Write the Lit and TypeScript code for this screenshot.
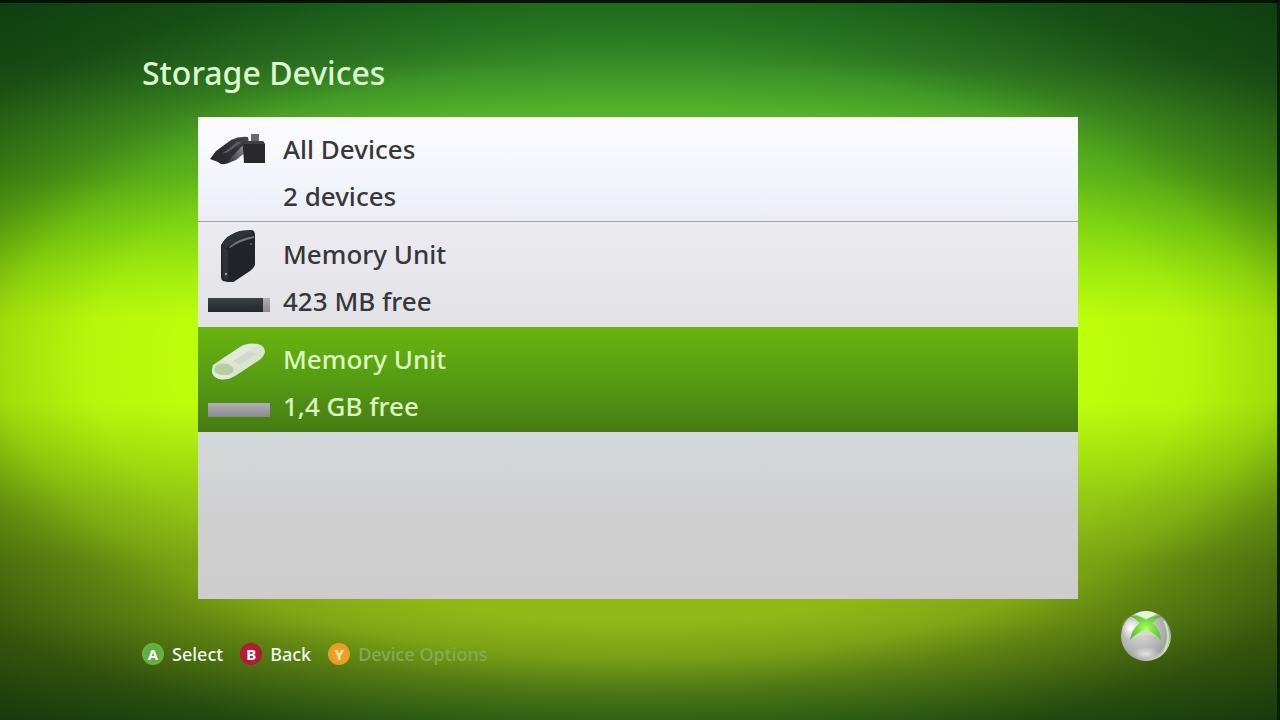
import { LitElement, html, css, svg, nothing } from "lit";
import { customElement, property, state } from "lit/decorators.js";
import { classMap } from "lit/directives/class-map.js";

type Kind = "all" | "unit" | "usb";

interface Device {
  kind: Kind;
  name: string;
  detail: string;
  used?: number;
}

const allIcon = svg`
  <svg viewBox="0 -5 62 54" aria-hidden="true">
    <defs>
      <linearGradient id="arm" x1="0" y1="1" x2="1" y2="0">
        <stop offset="0" stop-color="#26262b" />
        <stop offset=".6" stop-color="#303036" />
        <stop offset="1" stop-color="#4b4b50" />
      </linearGradient>
      <linearGradient id="side" x1="0" y1="1" x2="1" y2="0">
        <stop offset="0" stop-color="#2c2c31" />
        <stop offset="1" stop-color="#a5a5aa" />
      </linearGradient>
    </defs>
    <path d="M18 36 L22 26 L33 16 L40 13 L38 24 L28 32 Z" fill="url(#side)" />
    <path d="M2 31 L8 23 L23 12 Q31 8 40 9 L41 15 L33 19 L24 29 L19 35 Q14 38 10 34 Z" fill="url(#arm)" />
    <path d="M14 26 L29 14 L34 14 L20 24 Z" fill="#5c5c62" />
    <path d="M43 6 H51 V13 H43 Z" fill="#68686e" />
    <path d="M36 13 H55 L57 16 V35 H36 L35 20 Z" fill="#28282d" />
    <path d="M37 13 H55 L56 16 H36 Z" fill="#3f3f45" />
  </svg>`;

const unitIcon = svg`
  <svg viewBox="0 -2 62 54" aria-hidden="true">
    <path d="M13 15 Q18 5 32 1 L44 0 Q47 1 47 5 L47 35 Q46 38 42 41 L24 53 L15 51 Q13 50 13 46 Z" fill="#222429" />
    <path d="M13 16 Q18 5 32 1 L43 0 L44 5 Q31 7 19 18 Z" fill="#303239" />
    <path d="M21 17 Q31 8 46 6 L46 8 Q32 11 22 18 Z" fill="#73747a" />
    <path d="M14 17 L20 20 V50 L15 49 Z" fill="#303238" />
    <circle cx="18" cy="44" r="1.2" fill="#9a9aa0" />
    <circle cx="43" cy="14" r="1" fill="#65666c" />
  </svg>`;

const usbIcon = svg`
  <svg viewBox="0 -3 62 54" aria-hidden="true">
    <path d="M5 29 L32 11 Q39 6 50 8 Q57 10 57 16 Q56 21 50 25 L27 40 Q19 45 11 43 Q3 40 4 33 Z" fill="#d9e6cd" />
    <path d="M14 23 L34 10 Q40 7 50 9 L22 27 Z" fill="#e2e8db" />
    <path d="M25 25 L41 15 L48 18 L32 29 Z" fill="#d2d8cb" />
    <path d="M7 31 Q12 26 20 28 Q27 31 25 36 Q19 41 12 39 Q5 37 7 31 Z" fill="#b3cda5" />
    <path d="M4 34 Q8 40 20 39 L24 41 Q13 45 9 42 Q4 40 4 34 Z" fill="#e2efd8" />
  </svg>`;

const icons = { all: allIcon, unit: unitIcon, usb: usbIcon };

@customElement("device-row")
export class DeviceRow extends LitElement {
  static styles = css`
    :host {
      display: block;
    }
    .row {
      box-sizing: border-box;
      display: grid;
      grid-template-columns: 62px 1fr;
      grid-template-rows: 47px 47px;
      column-gap: 13px;
      align-items: center;
      width: 100%;
      height: 105px;
      padding: 9px 10px 0;
      border: 0;
      border-bottom: 1px solid transparent;
      background: none;
      color: #37373b;
      font: 500 26px/47px "Noto Sans", "Open Sans", sans-serif;
      text-align: left;
      cursor: pointer;
    }
    .row:focus {
      outline: none;
    }
    .divided {
      border-bottom-color: #a3a4a7;
    }
    .selected {
      background: linear-gradient(#6ab40f, #579f12 45%, #467b14) border-box;
      color: #dcf7c0;
    }
    .picture svg {
      display: block;
      width: 62px;
      height: 54px;
    }
    .meter {
      height: 14px;
      margin-top: 6px;
      background: linear-gradient(#b0b0b3, #8a8a8e);
    }
    .used {
      display: block;
      height: 100%;
      background: linear-gradient(#3c4145, #22272c);
    }
  `;

  @property({ attribute: false }) device!: Device;
  @property({ type: Boolean }) selected = false;
  @property({ type: Boolean }) divided = false;

  render() {
    const { kind, name, detail, used } = this.device;
    return html`
      <button
        class=${classMap({ row: true, selected: this.selected, divided: this.divided })}
        aria-pressed=${this.selected}
      >
        <span class="picture">${icons[kind]}</span>
        <span>${name}</span>
        ${used === undefined
          ? html`<span></span>`
          : html`<span class="meter">
              ${used ? html`<span class="used" style="width:${used}%"></span>` : nothing}
            </span>`}
        <span>${detail}</span>
      </button>
    `;
  }
}

@customElement("app-root")
export class AppRoot extends LitElement {
  static styles = css`
    :host {
      display: block;
      font-family: "Noto Sans", "Open Sans", sans-serif;
    }
    .screen {
      box-sizing: border-box;
      display: flex;
      flex-direction: column;
      min-height: 100vh;
      padding: 49px 104px 0 142px;
      border-top: 3px solid #041204;
      border-right: 3px solid #06200a;
      background:
        radial-gradient(
          60% 50% at 50% 50%,
          rgba(0, 28, 5, 0) 56%,
          rgba(0, 28, 5, 0.04) 72%,
          rgba(0, 28, 5, 0.15) 83%,
          rgba(0, 28, 5, 0.34) 92%,
          rgba(0, 28, 5, 0.64) 112%,
          rgba(0, 28, 5, 0.76) 130%
        ),
        linear-gradient(
          #38ac30 0%,
          #42a030 8%,
          #58ba2a 16%,
          #66c41c 24%,
          #84dc12 31%,
          #a6f20e 38%,
          #beff0c 44%,
          #beff0c 56%,
          #a8e80e 63%,
          #96cc14 70%,
          #8cb816 78%,
          #98c018 86%,
          #8cb41a 92%,
          #5c9c22 100%
        );
    }
    .title {
      margin: 0;
      color: #dcfcd0;
      font-size: 32px;
      font-weight: 500;
      line-height: 42px;
    }
    .panel {
      flex: 1;
      margin: 23px 95px 0 56px;
      padding: 0;
      list-style: none;
      background: linear-gradient(
        #fdfdff 0,
        #f0f2fb 80px,
        #ececf0 105px,
        #e2e2e6 210px,
        #d5d8da 320px,
        #cfcfd0 400px,
        #cdcdce 100%
      );
    }
    .bar {
      display: flex;
      justify-content: space-between;
      align-items: flex-start;
      padding-bottom: 52px;
    }
    .actions {
      display: flex;
      gap: 17px;
      padding-top: 41px;
    }
    .action {
      display: flex;
      align-items: center;
      gap: 8px;
      padding: 0;
      border: 0;
      background: none;
      color: #eff8e8;
      font: 500 18px/28px "Noto Sans", "Open Sans", sans-serif;
      cursor: pointer;
    }
    .action:disabled {
      color: #83ab58;
      cursor: default;
    }
    .key {
      width: 22px;
      border-radius: 50%;
      color: #fff;
      font-size: 15px;
      font-weight: 700;
      line-height: 22px;
      text-align: center;
    }
    .a {
      background: radial-gradient(#58a63a, #6cba45);
    }
    .b {
      background: radial-gradient(#bd2440, #a8142c);
    }
    .y {
      background: radial-gradient(#eda52c, #e59a20);
      color: #fbeab8;
    }
    .guide {
      padding: 0;
      margin-top: 10px;
      border: 0;
      background: none;
      cursor: pointer;
    }
    .guide svg {
      display: block;
      width: 54px;
      height: 54px;
    }
  `;

  @state() private selected = 2;

  private devices: Device[] = [
    { kind: "all", name: "All Devices", detail: "2 devices" },
    { kind: "unit", name: "Memory Unit", detail: "423 MB free", used: 89 },
    { kind: "usb", name: "Memory Unit", detail: "1,4 GB free", used: 0 },
  ];

  render() {
    return html`
      <main class="screen">
        <h1 class="title">Storage Devices</h1>
        <ul class="panel">
          ${this.devices.map(
            (device, i) => html`<li>
              <device-row
                .device=${device}
                ?selected=${i === this.selected}
                ?divided=${i + 1 < this.selected}
                @click=${() => (this.selected = i)}
              ></device-row>
            </li>`
          )}
        </ul>
        <footer class="bar">
          <div class="actions">
            <button class="action"><span class="key a">A</span>Select</button>
            <button class="action"><span class="key b">B</span>Back</button>
            <button class="action" disabled><span class="key y">Y</span>Device Options</button>
          </div>
          <button class="guide" aria-label="Guide">
            <svg viewBox="0 0 54 54" aria-hidden="true">
              <defs>
                <radialGradient id="ball" cx=".4" cy=".4" r=".65">
                  <stop offset="0" stop-color="#dcdcdc" />
                  <stop offset=".55" stop-color="#b9b9bb" />
                  <stop offset=".85" stop-color="#a0a4a0" />
                  <stop offset="1" stop-color="#d3dfce" />
                </radialGradient>
                <radialGradient id="shine">
                  <stop offset="0" stop-color="#fff" />
                  <stop offset="1" stop-color="#fff" stop-opacity="0" />
                </radialGradient>
                <radialGradient id="glow" gradientUnits="userSpaceOnUse" cx="27" cy="20" r="18">
                  <stop offset="0" stop-color="#b6ff5c" />
                  <stop offset=".5" stop-color="#6fdf3a" />
                  <stop offset="1" stop-color="#62b53d" />
                </radialGradient>
              </defs>
              <circle cx="27" cy="27" r="25" fill="url(#ball)" />
              <ellipse cx="12" cy="19" rx="10" ry="12" fill="url(#shine)" />
              <ellipse cx="27" cy="45" rx="14" ry="7" fill="url(#shine)" opacity=".7" />
              <path d="M16 5 Q27 -1 38 5 L27 10 Z" fill="#e4f7dc" />
              <path
                d="M11 7 Q19 6 27 11 Q35 6 43 7 Q38 9 33 14 Q42 21 42 31 Q36 24 27 20 Q18 24 11 31 Q12 21 21 14 Q16 9 11 7 Z"
                fill="url(#glow)"
              />
              <path d="M27 20 Q35 24 37 28 Q27 24 17 28 Q20 23 27 20 Z" fill="#c9edb4" opacity=".6" />
              <path d="M45 12 Q53 26 45 43" fill="none" stroke="#c4e9ae" stroke-width="2" />
            </svg>
          </button>
        </footer>
      </main>
    `;
  }
}
